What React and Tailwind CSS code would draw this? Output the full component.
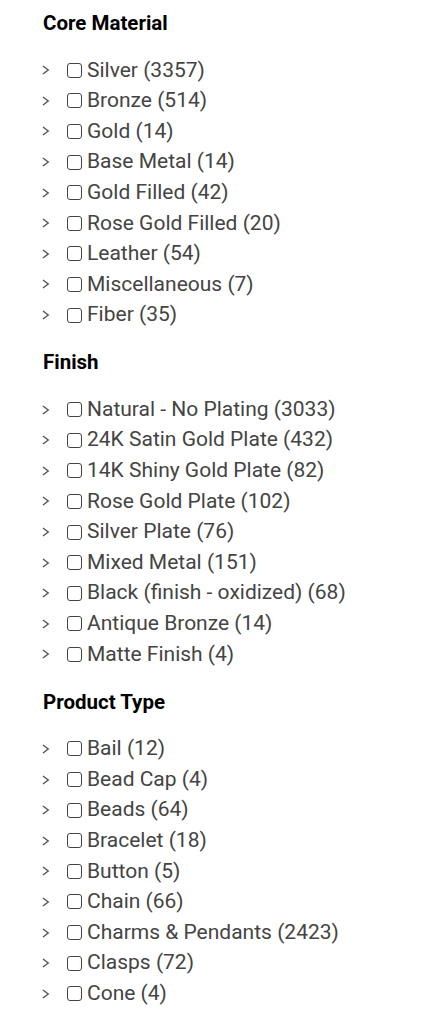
const groups = [
  {
    title: "Core Material",
    items: [
      "Silver (3357)",
      "Bronze (514)",
      "Gold (14)",
      "Base Metal (14)",
      "Gold Filled (42)",
      "Rose Gold Filled (20)",
      "Leather (54)",
      "Miscellaneous (7)",
      "Fiber (35)",
    ],
  },
  {
    title: "Finish",
    items: [
      "Natural - No Plating (3033)",
      "24K Satin Gold Plate (432)",
      "14K Shiny Gold Plate (82)",
      "Rose Gold Plate (102)",
      "Silver Plate (76)",
      "Mixed Metal (151)",
      "Black (finish - oxidized) (68)",
      "Antique Bronze (14)",
      "Matte Finish (4)",
    ],
  },
  {
    title: "Product Type",
    items: [
      "Bail (12)",
      "Bead Cap (4)",
      "Beads (64)",
      "Bracelet (18)",
      "Button (5)",
      "Chain (66)",
      "Charms & Pendants (2423)",
      "Clasps (72)",
      "Cone (4)",
    ],
  },
];

const Chevron = () => (
  <svg width="9" height="10" viewBox="0 0 9 10" className="shrink-0 -ml-[1px]">
    <path d="M1 1 L6.2 5 L1 9" fill="none" stroke="#555" strokeWidth="1.4" />
  </svg>
);

const Box = () => (
  <span className="block w-[15px] h-[15px] rounded-[3px] border-[1.5px] border-[#444] shrink-0" />
);

export default function App() {
  return (
    <div className="bg-white min-h-screen px-[43px] pt-[10px] font-['Roboto',sans-serif]">
      {groups.map((g) => (
        <section key={g.title} className="mb-[19px]">
          <h3 className="text-[20.5px] font-bold text-black leading-[26px] mb-[19px]">{g.title}</h3>
          <ul>
            {g.items.map((it) => (
              <li key={it} className="flex items-center h-[30.6px] text-[21px] text-[#444]">
                <Chevron />
                <span className="ml-[16px] mr-[5px]"><Box /></span>
                <span>{it}</span>
              </li>
            ))}
          </ul>
        </section>
      ))}
    </div>
  );
}
